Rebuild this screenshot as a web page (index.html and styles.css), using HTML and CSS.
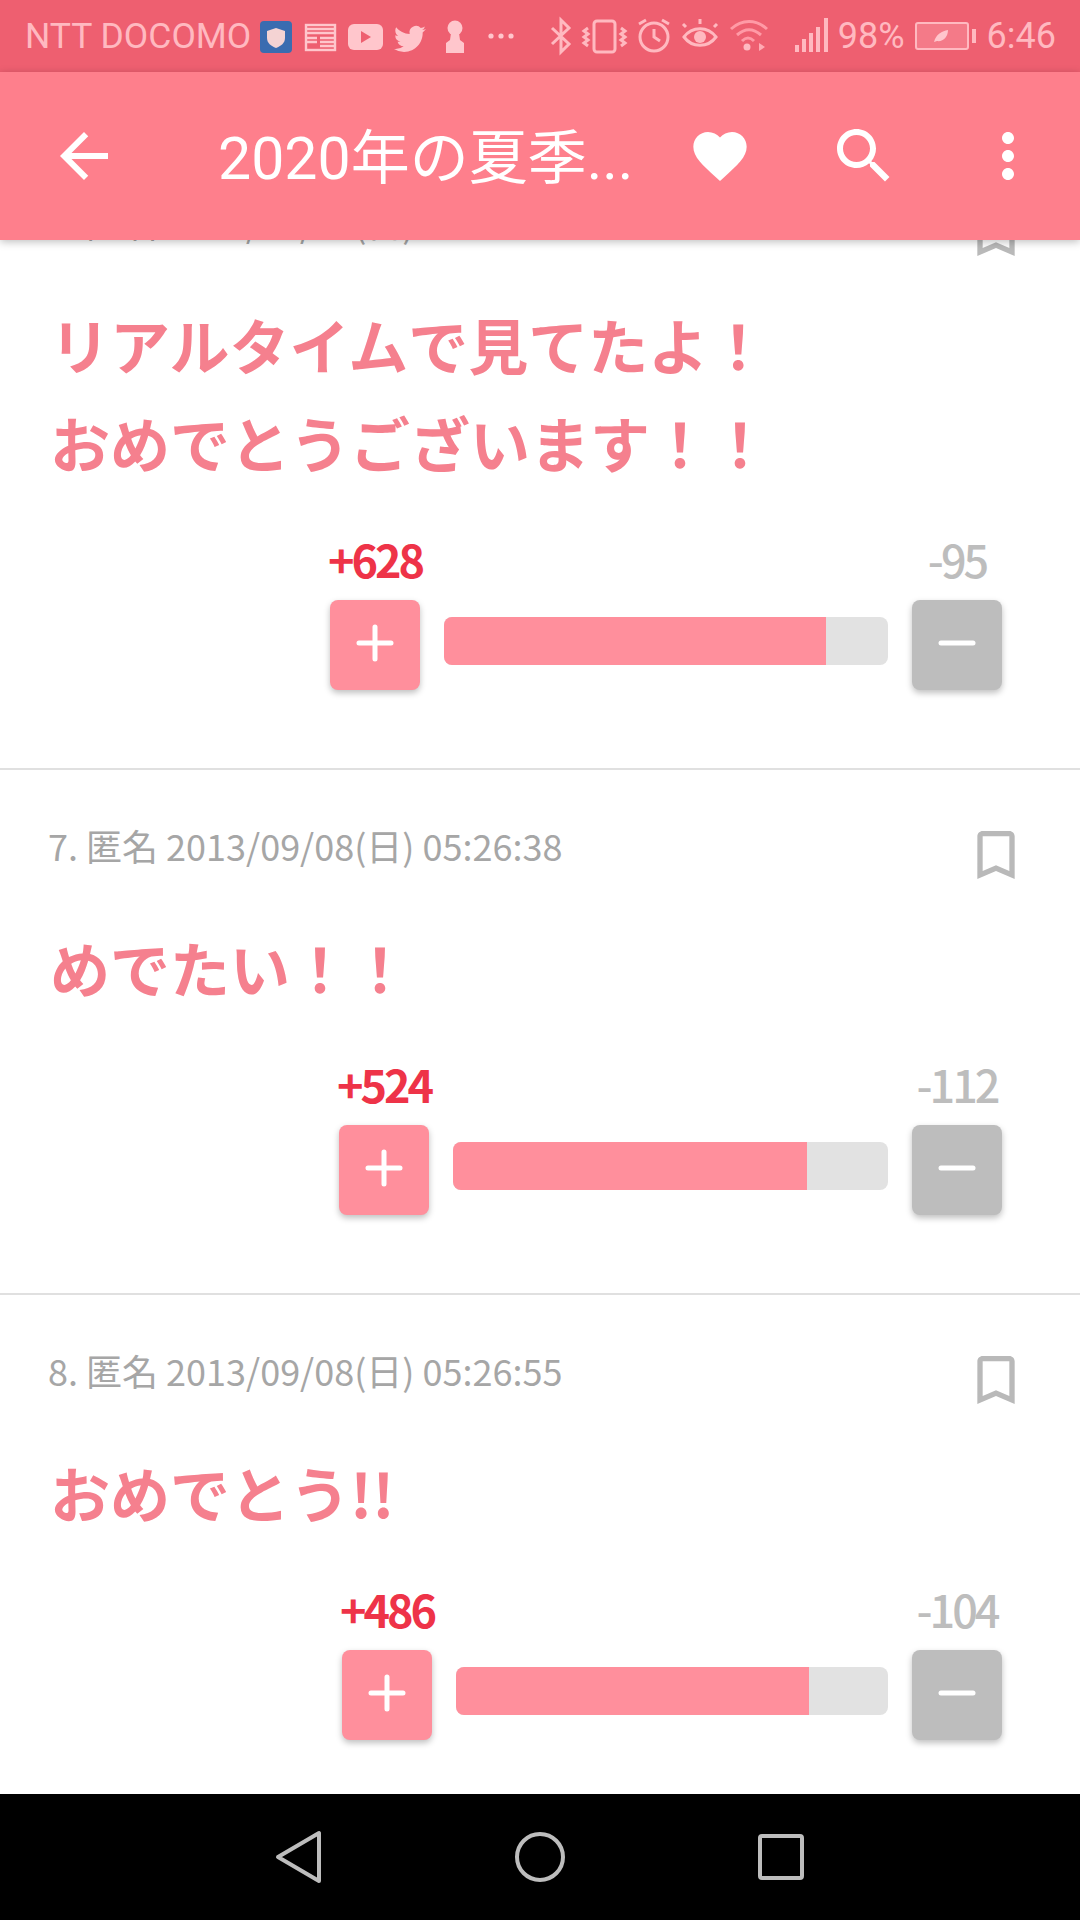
FILE: index.html
```html
<!DOCTYPE html>
<html lang="ja">
<head>
  <meta charset="UTF-8">
  <title>2020年の夏季オリンピック</title>
  <link rel="stylesheet" href="styles.css">
</head>
<body>

  <div class="status-bar">
    <span class="carrier">NTT DOCOMO</span>
    <svg class="status-left" width="254" height="40" viewBox="260 16 254 40">
      <rect x="260" y="21" width="32" height="32" rx="4" fill="#3a6cb0"/>
      <path d="M276 28l9 3v7c0 5-4 8-9 10-5-2-9-5-9-10v-7z" fill="#f4d3d3"/>
      <g fill="none" stroke="#ffc6cc" stroke-width="2.4">
        <rect x="306" y="25" width="29" height="25"/>
        <path d="M306 29h29M306 33h29M320 38h15M320 42h15M320 46h15M306 38h11M306 42h11"/>
      </g>
      <rect x="348" y="24" width="35" height="26" rx="6" fill="#ffc6cc"/>
      <path d="M361 31l10 6-10 6z" fill="#ee5f70"/>
      <path transform="translate(394 23) scale(1.33)" fill="#ffc6cc" d="M23.953 4.57a10 10 0 01-2.825.775 4.958 4.958 0 002.163-2.723c-.951.555-2.005.959-3.127 1.184a4.92 4.92 0 00-8.384 4.482C7.69 8.095 4.067 6.13 1.64 3.162a4.822 4.822 0 00-.666 2.475c0 1.71.87 3.213 2.188 4.096a4.904 4.904 0 01-2.228-.616v.06a4.923 4.923 0 003.946 4.827 4.996 4.996 0 01-2.212.085 4.936 4.936 0 004.604 3.417 9.867 9.867 0 01-6.102 2.105c-.39 0-.779-.023-1.17-.067a13.995 13.995 0 007.557 2.209c9.053 0 13.998-7.496 13.998-13.985 0-.21 0-.42-.015-.63A9.935 9.935 0 0024 4.59z"/>
      <circle cx="455" cy="28" r="7.5" fill="#ffc6cc"/>
      <path d="M451 33h8l1 7 4 3v10h-18V43l4-3z" fill="#ffc6cc"/>
      <g fill="#ffc6cc">
        <circle cx="491" cy="36" r="2.6"/>
        <circle cx="501" cy="36" r="2.6"/>
        <circle cx="511" cy="36" r="2.6"/>
      </g>
    </svg>
    <div class="status-right">
      <svg width="280" height="40" viewBox="554 16 280 40">
        <g fill="none" stroke="#ffb9c0" stroke-width="3">
          <path d="M556 28l17 16-8 8V20l8 8-17 16"/>
          <rect x="598" y="21" width="21" height="31" rx="3"/>
          <path d="M592 28l-4 3 4 3-4 3 4 3-4 3 4 3M625 28l4 3-4 3 4 3-4 3 4 3-4 3"/>
          <circle cx="658" cy="37" r="14"/>
          <path d="M658 29v8l6 4M643 24l7-4M673 24l-7-4"/>
          <path d="M688 37c8-11 24-11 32 0-8 11-24 11-32 0z"/>
          <path d="M690 27l-3-3M704 24v-5M718 27l3-3"/>
        </g>
        <circle cx="704" cy="37" r="6" fill="#ffb9c0"/>
        <g fill="none" stroke="#ff9aa6" stroke-width="3">
          <path d="M735 29c11-10 25-10 36 0"/>
          <path d="M741 35c8-7 16-7 24 0"/>
          <path d="M746 41c4-4 8-4 12 0"/>
        </g>
        <circle cx="751" cy="47" r="3.5" fill="#ffb9c0"/>
        <path d="M763 43l6 4-6 4z" fill="#ffaab3"/>
        <g fill="#ffb9c0">
          <rect x="799" y="45" width="4" height="7"/>
          <rect x="806" y="39" width="4" height="13"/>
          <rect x="813" y="33" width="4" height="19"/>
          <rect x="820" y="27" width="4" height="25"/>
          <rect x="828" y="18" width="4" height="34"/>
        </g>
      </svg>
      <span class="battery-text">98%</span>
      <svg class="battery" width="62" height="30" viewBox="0 0 62 30">
        <rect x="1" y="2" width="52" height="26" rx="2" fill="#f47a88" stroke="#ffb9c0" stroke-width="2"/>
        <rect x="57" y="8" width="4" height="14" fill="#ffb9c0"/>
        <path d="M19 21c2-8 8-11 14-12 0 7-5 12-11 11z" fill="#ffc6cc"/>
      </svg>
      <span class="clock">6:46</span>
    </div>
  </div>

  <div class="app-bar">
    <svg class="bar-icon" viewBox="0 0 24 24"><path d="M20 11H7.83l5.59-5.59L12 4l-8 8 8 8 1.41-1.41L7.83 13H20v-2z"/></svg>
    <div class="page-title">2020年の夏季...</div>
    <div class="bar-actions">
      <svg class="bar-icon heart" viewBox="0 0 24 24"><path d="M12 21.35l-1.45-1.32C5.4 15.36 2 12.28 2 8.5 2 5.42 4.42 3 7.5 3c1.74 0 3.41.81 4.5 2.09C13.09 3.81 14.76 3 16.5 3 19.58 3 22 5.42 22 8.5c0 3.78-3.4 6.86-8.55 11.54L12 21.35z"/></svg>
      <svg class="bar-icon" viewBox="0 0 24 24"><path d="M15.5 14h-.79l-.28-.27C15.41 12.59 16 11.11 16 9.5 16 5.91 13.09 3 9.5 3S3 5.91 3 9.5 5.91 16 9.5 16c1.61 0 3.09-.59 4.23-1.57l.27.28v.79l5 4.99L20.49 19l-4.99-5zm-6 0C7.01 14 5 11.99 5 9.5S7.01 5 9.5 5 14 7.01 14 9.5 11.99 14 9.5 14z"/></svg>
      <svg class="bar-icon" viewBox="0 0 24 24"><path d="M12 8c1.1 0 2-.9 2-2s-.9-2-2-2-2 .9-2 2 .9 2 2 2zm0 2c-1.1 0-2 .9-2 2s.9 2 2 2 2-.9 2-2-.9-2-2-2zm0 6c-1.1 0-2 .9-2 2s.9 2 2 2 2-.9 2-2-.9-2-2-2z"/></svg>
    </div>
  </div>

  <div class="comments">

    <div class="comment first">
      <div class="meta">
        <span>6. 匿名 2013/09/08(日) 05:26:12</span>
        <svg class="bookmark" viewBox="0 0 24 24"><path d="M17 3H7c-1.1 0-1.99.9-1.99 2L5 21l7-3 7 3V5c0-1.1-.9-2-2-2zm0 15l-5-2.18L7 18V5h10v13z"/></svg>
      </div>
      <p class="body-text">リアルタイムで見てたよ！<br>おめでとうございます！！</p>
      <div class="vote">
        <div class="vote-side">
          <span class="count plus">+628</span>
          <button class="vote-btn plus-btn"><svg viewBox="0 0 40 40"><path d="M20 4v32M4 20h32"/></svg></button>
        </div>
        <div class="meter" style="width: 444px"><div class="meter-fill" style="width: 86%"></div></div>
        <div class="vote-side">
          <span class="count minus">-95</span>
          <button class="vote-btn minus-btn"><svg viewBox="0 0 40 40"><path d="M4 20h32"/></svg></button>
        </div>
      </div>
    </div>

    <div class="comment">
      <div class="meta">
        <span>7. 匿名 2013/09/08(日) 05:26:38</span>
        <svg class="bookmark" viewBox="0 0 24 24"><path d="M17 3H7c-1.1 0-1.99.9-1.99 2L5 21l7-3 7 3V5c0-1.1-.9-2-2-2zm0 15l-5-2.18L7 18V5h10v13z"/></svg>
      </div>
      <p class="body-text">めでたい！！</p>
      <div class="vote">
        <div class="vote-side">
          <span class="count plus">+524</span>
          <button class="vote-btn plus-btn"><svg viewBox="0 0 40 40"><path d="M20 4v32M4 20h32"/></svg></button>
        </div>
        <div class="meter" style="width: 435px"><div class="meter-fill" style="width: 81.4%"></div></div>
        <div class="vote-side">
          <span class="count minus">-112</span>
          <button class="vote-btn minus-btn"><svg viewBox="0 0 40 40"><path d="M4 20h32"/></svg></button>
        </div>
      </div>
    </div>

    <div class="comment">
      <div class="meta">
        <span>8. 匿名 2013/09/08(日) 05:26:55</span>
        <svg class="bookmark" viewBox="0 0 24 24"><path d="M17 3H7c-1.1 0-1.99.9-1.99 2L5 21l7-3 7 3V5c0-1.1-.9-2-2-2zm0 15l-5-2.18L7 18V5h10v13z"/></svg>
      </div>
      <p class="body-text">おめでとう!!</p>
      <div class="vote">
        <div class="vote-side">
          <span class="count plus">+486</span>
          <button class="vote-btn plus-btn"><svg viewBox="0 0 40 40"><path d="M20 4v32M4 20h32"/></svg></button>
        </div>
        <div class="meter" style="width: 432px"><div class="meter-fill" style="width: 81.6%"></div></div>
        <div class="vote-side">
          <span class="count minus">-104</span>
          <button class="vote-btn minus-btn"><svg viewBox="0 0 40 40"><path d="M4 20h32"/></svg></button>
        </div>
      </div>
    </div>

  </div>

  <div class="nav-bar">
    <svg width="60" height="60" viewBox="0 0 60 60"><path d="M9 30L50 6v48z"/></svg>
    <svg width="60" height="60" viewBox="0 0 60 60"><circle cx="30" cy="30" r="23"/></svg>
    <svg width="60" height="60" viewBox="0 0 60 60"><rect x="9" y="9" width="42" height="42" rx="2"/></svg>
  </div>

</body>
</html>
```

FILE: styles.css
```css
* {
  box-sizing: border-box;
}
body {
  margin: 0;
  width: 1080px;
  height: 1920px;
  display: flex;
  flex-direction: column;
  overflow: hidden;
  background: #fff;
  font-family: "Noto Sans CJK JP", "Noto Sans", sans-serif;
}

.status-bar {
  height: 72px;
  flex: none;
  display: flex;
  align-items: center;
  padding: 0 24px 0 25px;
  background: #ee5f70;
  color: #ffb9c0;
  font-family: Roboto, sans-serif;
  font-size: 36px;
}
.carrier {
  width: 235px;
  font-size: 35.5px;
  white-space: nowrap;
}
.status-left {
  flex: none;
}
.status-right {
  margin-left: auto;
  display: flex;
  align-items: center;
}
.battery-text {
  margin-left: 8px;
}
.battery {
  margin-left: 10px;
}
.clock {
  margin-left: 10px;
}

.app-bar {
  height: 168px;
  flex: none;
  display: flex;
  align-items: center;
  padding-left: 48px;
  background: #fe7f8c;
  box-shadow: 0 2px 8px rgba(0, 0, 0, 0.25);
  position: relative;
  z-index: 2;
}
.bar-icon {
  width: 72px;
  height: 72px;
  flex: none;
  fill: #fff;
}
.bar-icon.heart {
  width: 64px;
  height: 64px;
  margin: 4px;
}
.page-title {
  width: 414px;
  margin-left: 98px;
  padding-bottom: 6px;
  color: #fff;
  font-family: Roboto, "Noto Sans CJK JP", sans-serif;
  font-size: 59px;
  white-space: nowrap;
}
.bar-actions {
  margin-left: 52px;
  display: flex;
  gap: 72px;
}

.comments {
  flex: 1;
  overflow: hidden;
}
.comment {
  padding: 49px 78px 78px 48px;
  border-bottom: 2px solid #e0e0e0;
}
.comment.first {
  margin-top: -93px;
}
.meta {
  height: 52px;
  display: flex;
  align-items: center;
  justify-content: space-between;
  color: #a6a6a6;
  font-size: 36px;
  line-height: 52px;
}
.bookmark {
  width: 64px;
  height: 64px;
  margin-top: 20px;
  margin-right: -26px;
  fill: #b9b9b9;
}
.body-text {
  margin: 47px 0 0 2px;
  color: #f5808e;
  font-size: 60px;
  font-weight: 700;
  line-height: 98px;
}

.vote {
  margin-top: 38px;
  display: flex;
  justify-content: flex-end;
  gap: 24px;
}
.vote-side {
  width: 90px;
  display: flex;
  flex-direction: column;
  align-items: center;
}
.count {
  height: 60px;
  margin-bottom: 11px;
  font-size: 45px;
  font-weight: 700;
  line-height: 60px;
  letter-spacing: -3px;
  white-space: nowrap;
}
.count.plus {
  color: #ee3348;
}
.count.minus {
  color: #bdbdbd;
  font-weight: 500;
}
.vote-btn {
  width: 90px;
  height: 90px;
  padding: 0;
  border: none;
  border-radius: 8px;
  box-shadow: 0 3px 6px rgba(0, 0, 0, 0.25);
  display: flex;
  align-items: center;
  justify-content: center;
}
.vote-btn svg {
  width: 40px;
  height: 40px;
  margin-top: -4px;
  fill: none;
  stroke: #fff;
  stroke-width: 5;
  stroke-linecap: round;
}
.plus-btn {
  background: #ff8f9c;
}
.minus-btn {
  background: #bdbdbd;
}
.meter {
  height: 48px;
  margin-top: 88px;
  border-radius: 8px;
  background: #e2e2e2;
  overflow: hidden;
}
.meter-fill {
  height: 100%;
  background: #ff8f9c;
}

.nav-bar {
  height: 126px;
  flex: none;
  display: flex;
  align-items: center;
  justify-content: center;
  gap: 181px;
  background: #000;
}
.nav-bar svg {
  fill: none;
  stroke: #bdbdbd;
  stroke-width: 4;
  stroke-linejoin: round;
}
```
